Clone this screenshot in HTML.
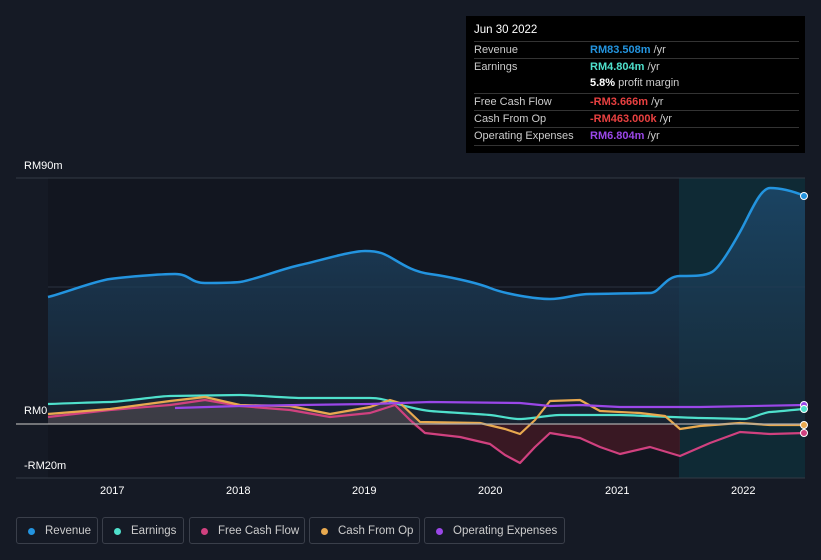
<!DOCTYPE html><html><head><style>
body{margin:0;width:821px;height:560px;background:#151a25;font-family:"Liberation Sans",sans-serif;overflow:hidden;position:relative}
.tt{position:absolute;left:466px;top:16px;width:339px;height:137px;background:#000;color:#ccc;font-size:11px}
.tt .h{position:absolute;left:8px;top:8px;color:#fff;font-size:11.5px}
.r{position:absolute;left:8px;width:325px;border-top:1px solid #333;height:17px;line-height:17px}
.r span{position:absolute;left:116px}
.lg{position:absolute;top:517px;height:27px;border:1px solid #3a3f4a;border-radius:3px;color:#ccc;font-size:11.5px;line-height:27px;box-sizing:border-box;padding-left:28px}
.lg i{position:absolute;left:11px;top:10px;width:7px;height:7px;border-radius:50%}
.ax{position:absolute;color:#fff;font-size:11px}
</style></head><body>
<svg width="821" height="560" style="position:absolute;left:0;top:0">
<defs><linearGradient id="g" x1="0" y1="0" x2="0" y2="1"><stop offset="0" stop-color="#1d4a6e" stop-opacity=".8"/><stop offset="1" stop-color="#1a2a3a" stop-opacity=".6"/></linearGradient></defs>
<rect x="48" y="178" width="757" height="300" fill="#121620"/>
<rect x="679" y="178" width="126" height="300" fill="#0f2a35"/>
<line x1="16" y1="178" x2="805" y2="178" stroke="#333a45"/>
<line x1="48" y1="287" x2="805" y2="287" stroke="#2a3340"/>
<path d="M48,297 C64,293 95,281 110,279 S160,274 175,274 S190,283 205,283 S230,283 240,282 S285,268 300,265 S350,251 365,251 S385,254 395,260 S415,272 430,274 S475,282 490,288 S535,299 550,299 S575,294 590,294 S640,293 650,293 S665,276 680,276 S705,276 712,272 S730,250 740,232 S760,188 770,188 S790,190 805,196 L805,424 L48,424Z" fill="url(#g)"/>
<path d="M48,297 C64,293 95,281 110,279 S160,274 175,274 S190,283 205,283 S230,283 240,282 S285,268 300,265 S350,251 365,251 S385,254 395,260 S415,272 430,274 S475,282 490,288 S535,299 550,299 S575,294 590,294 S640,293 650,293 S665,276 680,276 S705,276 712,272 S730,250 740,232 S760,188 770,188 S790,190 805,196" fill="none" stroke="#2394df" stroke-width="2.5"/>
<path d="M410,424 L425,433 L460,437 L490,444 L505,455 L520,463 L535,447 L550,433 L580,438 L600,447 L620,454 L650,447 L680,456 L680,424Z" fill="#4a1a25" opacity=".7"/>
<path d="M48,414 L110,409 L170,401 L205,397 L240,405 L290,406 L330,414 L370,407 L390,400 L400,403 L420,424 L48,424Z" fill="#6a5a60" opacity=".45"/>
<g fill="none" stroke-width="2.2" stroke-linejoin="round">
<path d="M48,404 C80,403 100,402 110,402 S160,396 170,396 S230,395 240,395 S290,398 300,398 S360,398 370,398 S390,401 395,403 S420,410 430,411 S480,414 490,415 S510,419 520,419 S550,415 560,415 S610,415 620,415 S690,418 700,418 S740,419 745,419 S765,412 770,412 S800,409 805,409" stroke="#4fe0cc"/>
<path d="M48,417 L110,410 L170,405 L205,400 L240,406 L290,410 L330,417 L370,413 L395,405 L410,420 L425,433 L460,437 L490,444 L505,455 L520,463 L535,447 L550,433 L580,438 L600,447 L620,454 L650,447 L680,456 L710,443 L740,432 L770,434 L805,433" stroke="#d0417f"/>
<path d="M48,414 L110,409 L170,401 L205,397 L240,405 L290,406 L330,414 L370,407 L390,400 L400,403 L420,422 L480,423 L505,429 L520,434 L535,420 L550,401 L580,400 L600,411 L640,413 L665,416 L680,429 L700,426 L740,423 L770,425 L805,425" stroke="#e8a94f"/>
<path d="M175,408 L240,406 L300,405 L370,404 L400,403 L430,402 L520,403 L550,406 L580,405 L620,407 L700,407 L805,405" stroke="#9a47e8"/>
</g>
<line x1="16" y1="424" x2="805" y2="424" stroke="#aaa" stroke-width="1.2"/>
<line x1="16" y1="478" x2="805" y2="478" stroke="#333a45"/>
<circle cx="804" cy="196" r="3.5" fill="#2394df" stroke="#fff" stroke-width="1"/>
<circle cx="804" cy="405" r="3.5" fill="#9a47e8" stroke="#fff" stroke-width="1"/>
<circle cx="804" cy="409" r="3.5" fill="#4fe0cc" stroke="#fff" stroke-width="1"/>
<circle cx="804" cy="425" r="3.5" fill="#e8a94f" stroke="#fff" stroke-width="1"/>
<circle cx="804" cy="433" r="3.5" fill="#d0417f" stroke="#fff" stroke-width="1"/>
</svg>
<div class="ax" style="left:24px;top:160px">RM90m</div>
<div class="ax" style="left:24px;top:405px">RM0</div>
<div class="ax" style="left:24px;top:460px">-RM20m</div>
<div class="ax" style="left:100px;top:485px">2017</div>
<div class="ax" style="left:226px;top:485px">2018</div>
<div class="ax" style="left:352px;top:485px">2019</div>
<div class="ax" style="left:478px;top:485px">2020</div>
<div class="ax" style="left:605px;top:485px">2021</div>
<div class="ax" style="left:731px;top:485px">2022</div>
<div class="tt"><div class="h">Jun 30 2022</div>
<div class="r" style="top:25px">Revenue<span style="color:#2394df;font-weight:bold">RM83.508m <b style="color:#ccc;font-weight:normal">/yr</b></span></div>
<div class="r" style="top:42px">Earnings<span style="color:#4fe0cc;font-weight:bold">RM4.804m <b style="color:#ccc;font-weight:normal">/yr</b></span></div>
<div class="r" style="top:59px;border:0"><span style="color:#fff;font-weight:bold">5.8% <b style="color:#ccc;font-weight:normal">profit margin</b></span></div>
<div class="r" style="top:77px">Free Cash Flow<span style="color:#e84040;font-weight:bold">-RM3.666m <b style="color:#ccc;font-weight:normal">/yr</b></span></div>
<div class="r" style="top:94px">Cash From Op<span style="color:#e84040;font-weight:bold">-RM463.000k <b style="color:#ccc;font-weight:normal">/yr</b></span></div>
<div class="r" style="top:111px;border-bottom:1px solid #333">Operating Expenses<span style="color:#9a47e8;font-weight:bold">RM6.804m <b style="color:#ccc;font-weight:normal">/yr</b></span></div>
</div>
<div class="lg" style="left:16px;width:82px"><i style="background:#2394df"></i>Revenue</div>
<div class="lg" style="left:102px;width:82px"><i style="background:#4fe0cc"></i>Earnings</div>
<div class="lg" style="left:189px;width:116px"><i style="background:#d0417f"></i>Free Cash Flow</div>
<div class="lg" style="left:309px;width:111px"><i style="background:#e8a94f"></i>Cash From Op</div>
<div class="lg" style="left:424px;width:141px"><i style="background:#9a47e8"></i>Operating Expenses</div>
</body></html>
